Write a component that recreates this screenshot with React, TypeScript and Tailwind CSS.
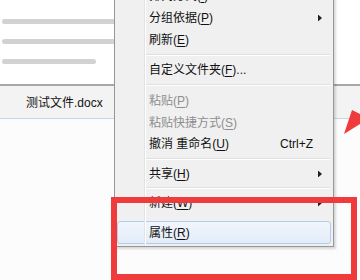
import type { ReactNode } from "react";

type Item = {
  label: ReactNode;
  h: number;
  disabled?: boolean;
  sub?: boolean;
  shortcut?: string;
};

const k = (c: string) => <span className="underline underline-offset-[2px]">{c}</span>;

function Arrow() {
  return (
    <svg className="absolute right-[11px] top-1/2 -translate-y-1/2" width="4" height="7" viewBox="0 0 4 7">
      <polygon points="0,0 4,3.5 0,7" fill="#222" />
    </svg>
  );
}

function Row({ item }: { item: Item }) {
  return (
    <div
      className={`relative flex items-center pl-[34px] pr-[20px] ${item.disabled ? "text-[#8e8e8e]" : "text-[#111]"}`}
      style={{ height: item.h }}
    >
      <span className="flex-1 whitespace-nowrap">{item.label}</span>
      {item.shortcut && <span className="whitespace-nowrap">{item.shortcut}</span>}
      {item.sub && <Arrow />}
    </div>
  );
}

function Sep({ mt, mb }: { mt: number; mb: number }) {
  return (
    <div className="ml-[31px] mr-[3px] h-[2px] border-t border-[#e0e0e0] border-b border-b-white" style={{ marginTop: mt, marginBottom: mb }} />
  );
}

export default function App() {
  return (
    <div className="relative w-[360px] h-[280px] overflow-hidden bg-[#fcfcfc] font-['Liberation_Sans','Noto_Sans_CJK_SC',sans-serif] text-[12px]">
      {/* file pane behind the menu */}
      <div className="flex flex-col">
        <div className="h-[86px] bg-white border-b-2 border-[#a8a8a8] flex flex-col gap-[15px] pt-[19px] pl-[2px]">
          <div className="h-[5px] w-[200px] rounded-full bg-[#d2d2d2]" />
          <div className="h-[5px] w-[200px] rounded-full bg-[#d2d2d2]" />
          <div className="h-[5px] w-[94px] rounded-full bg-[#d2d2d2]" />
        </div>
        <div className="h-[33px] bg-[#f3f3f3] border-b border-[#c8d6e5] flex items-center pl-[26px] text-[#111] pt-[2px]">
          测试文件.docx
        </div>
      </div>

      {/* context menu */}
      <div className="absolute left-[114px] top-[-15px] w-[220px] bg-[#f0f0f0] border-x border-b border-[#979797] shadow-[2px_2px_2px_rgba(0,0,0,0.15)] pb-[2px]">
        <div className="absolute left-[29px] top-0 bottom-0 w-[2px] border-l border-[#e2e3e3] border-r border-r-white" />
        <Row item={{ label: <>排列方式({k("I")})</>, h: 22 }} />
        <Row item={{ label: <>分组依据({k("P")})</>, h: 22, sub: true }} />
        <Row item={{ label: <>刷新({k("E")})</>, h: 22 }} />
        <Sep mt={3} mb={3} />
        <Row item={{ label: <>自定义文件夹({k("F")})...</>, h: 22 }} />
        <Sep mt={3} mb={4} />
        <Row item={{ label: <>粘贴({k("P")})</>, h: 22, disabled: true }} />
        <Row item={{ label: <>粘贴快捷方式({k("S")})</>, h: 21, disabled: true }} />
        <Row item={{ label: <>撤消 重命名({k("U")})</>, h: 21, shortcut: "Ctrl+Z" }} />
        <Sep mt={4} mb={3} />
        <Row item={{ label: <>共享({k("H")})</>, h: 21, sub: true }} />
        <Sep mt={3} mb={3} />
        <Row item={{ label: <>新建({k("W")})</>, h: 22, sub: true }} />
        <div className="h-[7px]" />
        <div className="mx-[2px] h-[23px] rounded-[3px] border border-[#b4cdea] bg-gradient-to-b from-[#f1f6fc] to-[#e2ecf8] flex items-center pl-[31px] text-[#111]">
          属性({k("R")})
        </div>
      </div>

      {/* red annotation box */}
      <div className="absolute left-[111px] top-[197px] w-[246px] h-[83px] border-[6px] border-[#ef3b3b]" />

      {/* red arrow */}
      <svg className="absolute left-0 top-0" width="360" height="280" viewBox="0 0 360 280">
        <polygon points="344,134 352,110 360,114 360,124" fill="#ef3b3b" />
      </svg>
    </div>
  );
}
